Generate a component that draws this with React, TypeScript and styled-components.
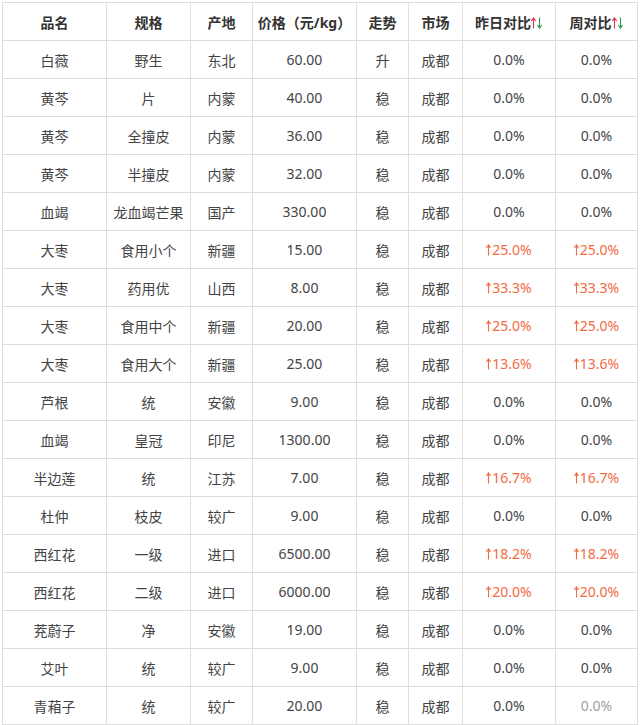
import React from 'react';
import styled, { createGlobalStyle } from 'styled-components';

const GlobalStyle = createGlobalStyle`
  html, body {
    margin: 0;
    padding: 0;
    background: #fff;
  }
  body {
    font-family: 'Noto Sans', 'Noto Sans CJK SC', sans-serif;
    color: #333;
  }
`;

const Wrapper = styled.div`
  padding: 2px 0 0 2px;
`;

const PriceTable = styled.table`
  border-collapse: collapse;
  table-layout: fixed;
  width: 635px;
  font-size: 14px;
  border: 1px solid #dedede;
`;

const HeadCell = styled.th`
  height: 37px;
  padding: 0;
  border: 1px solid #dedede;
  font-weight: 700;
  color: #333;
  text-align: center;
  white-space: nowrap;
  overflow: hidden;
`;

const Cell = styled.td<{ up?: boolean; faded?: boolean }>`
  height: 37px;
  padding: 0;
  border: 1px solid #dedede;
  text-align: center;
  white-space: nowrap;
  overflow: hidden;
  color: ${(p) => (p.up ? '#f26a3f' : p.faded ? '#a0a0a0' : '#444')};
`;

const ArrowIcon = styled.svg`
  display: inline-block;
  vertical-align: -1px;
  margin-right: 1px;
`;

function Arrow({ color, down }: { color: string; down?: boolean }) {
  return (
    <ArrowIcon width="5" height="12" viewBox="0 0 5 12">
      <g
        fill="none"
        stroke={color}
        strokeWidth="1.1"
        transform={down ? 'rotate(180 2.5 6)' : undefined}
      >
        <path d="M2.5 1.2 V11.5" />
        <path d="M0.4 4 L2.5 1 L4.6 4" />
      </g>
    </ArrowIcon>
  );
}

const columns = [
  { title: '品名', w: 104 },
  { title: '规格', w: 84 },
  { title: '产地', w: 62 },
  { title: '价格（元/kg）', w: 104 },
  { title: '走势', w: 52 },
  { title: '市场', w: 54 },
  { title: '昨日对比', w: 93, arrows: true },
  { title: '周对比', w: 82, arrows: true },
];

type Row = [string, string, string, string, string, string];

const rows: Row[] = [
  ['白薇', '野生', '东北', '60.00', '升', '0.0'],
  ['黄芩', '片', '内蒙', '40.00', '稳', '0.0'],
  ['黄芩', '全撞皮', '内蒙', '36.00', '稳', '0.0'],
  ['黄芩', '半撞皮', '内蒙', '32.00', '稳', '0.0'],
  ['血竭', '龙血竭芒果', '国产', '330.00', '稳', '0.0'],
  ['大枣', '食用小个', '新疆', '15.00', '稳', '25.0'],
  ['大枣', '药用优', '山西', '8.00', '稳', '33.3'],
  ['大枣', '食用中个', '新疆', '20.00', '稳', '25.0'],
  ['大枣', '食用大个', '新疆', '25.00', '稳', '13.6'],
  ['芦根', '统', '安徽', '9.00', '稳', '0.0'],
  ['血竭', '皇冠', '印尼', '1300.00', '稳', '0.0'],
  ['半边莲', '统', '江苏', '7.00', '稳', '16.7'],
  ['杜仲', '枝皮', '较广', '9.00', '稳', '0.0'],
  ['西红花', '一级', '进口', '6500.00', '稳', '18.2'],
  ['西红花', '二级', '进口', '6000.00', '稳', '20.0'],
  ['茺蔚子', '净', '安徽', '19.00', '稳', '0.0'],
  ['艾叶', '统', '较广', '9.00', '稳', '0.0'],
  ['青葙子', '统', '较广', '20.00', '稳', '0.0'],
];

function Change({ value }: { value: string }) {
  const up = value !== '0.0';
  return (
    <>
      {up && <Arrow color="#f26a3f" />}
      {value}%
    </>
  );
}

export default function App() {
  return (
    <Wrapper>
      <GlobalStyle />
      <PriceTable>
        <colgroup>
          {columns.map((c) => (
            <col key={c.title} style={{ width: c.w }} />
          ))}
        </colgroup>
        <thead>
          <tr>
            {columns.map((c) => (
              <HeadCell key={c.title}>
                {c.title}
                {c.arrows && (
                  <>
                    <Arrow color="#ec2c4c" />
                    <Arrow color="#2e9a4a" down />
                  </>
                )}
              </HeadCell>
            ))}
          </tr>
        </thead>
        <tbody>
          {rows.map((r, i) => {
            const up = r[5] !== '0.0';
            const last = i === rows.length - 1;
            return (
              <tr key={i}>
                <Cell>{r[0]}</Cell>
                <Cell>{r[1]}</Cell>
                <Cell>{r[2]}</Cell>
                <Cell>{r[3]}</Cell>
                <Cell>{r[4]}</Cell>
                <Cell>成都</Cell>
                <Cell up={up}>
                  <Change value={r[5]} />
                </Cell>
                <Cell up={up} faded={last}>
                  <Change value={r[5]} />
                </Cell>
              </tr>
            );
          })}
        </tbody>
      </PriceTable>
    </Wrapper>
  );
}
